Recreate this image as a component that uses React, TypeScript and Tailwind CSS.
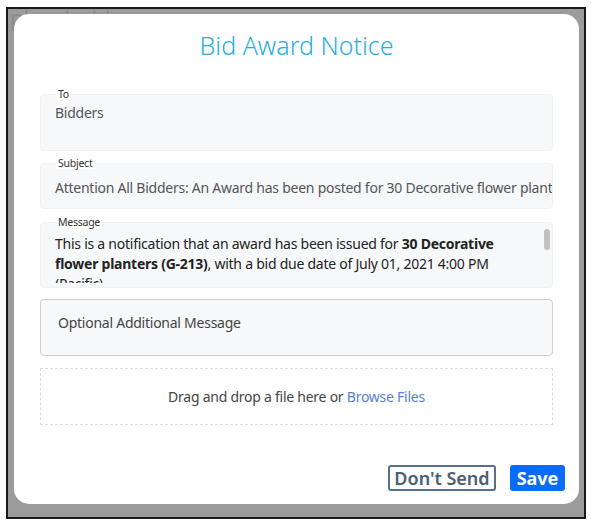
import React from "react";

const font = { fontFamily: '"Noto Sans", "Open Sans", Arial, sans-serif' };

function Field({ label, children, h }: { label: string; children: React.ReactNode; h: string }) {
  return (
    <div className={`relative rounded-[4px] bg-[#f7f8fa] border border-[#f0f1f3] ${h}`}>
      <span className="absolute z-10 left-[15px] -top-[7px] bg-white px-[2px] text-[10.5px] leading-[12px] text-[#333]">
        {label}
      </span>
      {children}
    </div>
  );
}

export default function App() {
  return (
    <div className="w-[591px] h-[528px] bg-white relative" style={font}>
      <div className="absolute left-[6px] top-[7px] w-[580px] h-[512px] border-2 border-[#1a1a1a] bg-[#9b9b9b] overflow-hidden">
        <div className="absolute left-[2px] -top-[8px] text-[22px] text-[#8a8a8a]">placeholders</div>
        <div className="relative ml-[6px] mt-[5px] w-[565px] h-[490px] rounded-[15px] bg-white flex flex-col px-[26px] tracking-[-0.25px]">
          <h1 className="mt-[15px] text-center text-[25px] leading-[32px] font-light tracking-normal text-[#2aaee3]">Bid Award Notice</h1>

          <div className="mt-[33px] flex flex-col">
            <Field label="To" h="h-[57px]">
              <div className="pl-[14px] pt-[8px] text-[14px] leading-[20px] text-[#555]">Bidders</div>
            </Field>
            <div className="h-[12px]" />
            <Field label="Subject" h="h-[46px]">
              <div className="pl-[14px] pr-[8px] pt-[14px] text-[14px] leading-[20px] text-[#555] whitespace-nowrap overflow-hidden">
                Attention All Bidders: An Award has been posted for 30 Decorative flower planters (G-213)
              </div>
            </Field>
            <div className="h-[13px]" />
            <Field label="Message" h="h-[66px]">
              <div className="h-[60px] overflow-hidden pl-[14px] pr-[24px] pt-[11px] text-[14px] leading-[20px] text-[#222]">
                This is a notification that an award has been issued for <b>30 Decorative flower planters (G-213)</b>, with a bid due date of July 01, 2021 4:00 PM (Pacific).
              </div>
              <div className="absolute right-[2px] top-[6px] w-[6px] h-[21px] rounded-[3px] bg-[#c1c1c1]" />
            </Field>
          </div>

          <div className="mt-[11px] h-[57px] rounded-[4px] border border-[#cfcfcf] bg-[#f7f8fa] pl-[17px] pt-[13px] text-[14px] leading-[20px] text-[#444]">
            Optional Additional Message
          </div>

          <div className="mt-[12px] h-[57px] border border-dashed border-[#dcdcdc] flex items-center justify-center text-[14px] text-[#444]">
            <span>
              Drag and drop a file here or <span className="text-[#5a7fd4]">Browse Files</span>
            </span>
          </div>

          <div className="mt-auto mb-[13px] flex justify-end gap-[14px] -mr-[12px] tracking-normal">
            <button className="h-[26px] w-[108px] rounded-[3px] border-2 border-[#56708a] text-[18px] leading-[20px] font-semibold text-[#4a6074]">
              Don't Send
            </button>
            <button className="h-[26px] w-[55px] rounded-[3px] bg-[#0b6cfb] text-[18px] leading-[20px] font-bold text-white">
              Save
            </button>
          </div>
        </div>
      </div>
    </div>
  );
}
